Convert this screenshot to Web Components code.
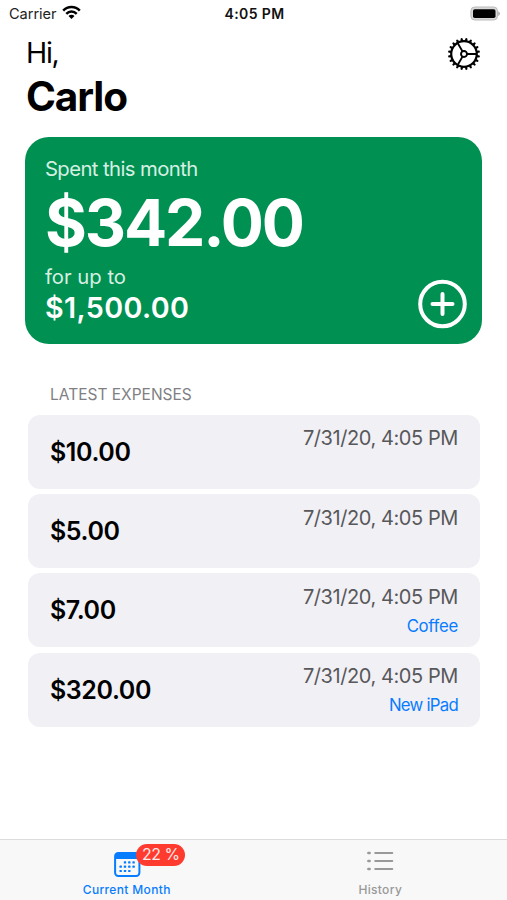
<!DOCTYPE html>
<html lang="en"><head><meta charset="utf-8"><title>Expenses</title>
<style>html,body{margin:0;background:#fff}body{font-family:Inter,"Liberation Sans",sans-serif;color:#000}</style></head>
<body><expense-app></expense-app>
<script>
const define = (name, html) => customElements.define(name, class extends HTMLElement {
  constructor() {
    super();
    const t = document.createElement('template');
    t.innerHTML = html;
    this.attachShadow({mode: 'open'}).append(t.content.cloneNode(true));
  }
});

define('status-bar', `<style>
:host{display:grid;grid-template-columns:1fr auto 1fr;align-items:center;height:27px;padding:0 7px 0 9px;box-sizing:border-box;line-height:20px}
.left{display:flex;align-items:center;gap:5px;font-size:14.6px;letter-spacing:-.05px;color:#222}
.time{font-weight:600;font-size:14px;letter-spacing:.4px;color:#111}
.bat{justify-self:end;display:block}svg{display:block}
.left svg{margin-top:-2px}
</style>
<div class="left"><span>Carrier</span><svg width="19" height="15" viewBox="0 0 19 15" fill="none" stroke="#000" stroke-width="2.5"><path d="M1.2 5.6C5.8.8 13.2.8 17.8 5.6"/><path d="M4.3 8.8C7.2 5.8 11.8 5.8 14.7 8.8"/><path d="M9.5 14 6.5 11C8.1 9.4 10.9 9.4 12.5 11Z" fill="#000" stroke="none"/></svg></div>
<span class="time">4:05 PM</span>
<svg class="bat" width="30" height="16" viewBox="0 0 30 16"><rect x=".9" y="1" width="26.6" height="13" rx="3.8" fill="#d8d8d8" stroke="#bbb" stroke-width="1"/><rect x="3" y="3.2" width="22.5" height="8.8" rx="1.8"/><path d="M28.2 5.3q1.7.7 1.7 2.3t-1.7 2.3z" fill="#aaa"/></svg>`);

customElements.define('gear-icon', class extends HTMLElement {
  constructor() {
    super();
    let teeth = '';
    for (let i = 0; i < 20; i++) teeth += `<path d="M14.8-1.1 16-.7V.7L14.8 1.1H13V-1.1Z" transform="rotate(${i * 18 + 9})"/>`;
    this.attachShadow({mode: 'open'}).innerHTML = `<style>:host{display:block}svg{display:block}</style>
<svg width="34" height="34" viewBox="-17 -17 34 34"><circle r="12.8" fill="none" stroke="#000" stroke-width="2.2"/>${teeth}
<g fill="none" stroke="#000" stroke-width="1.9"><circle r="3"/><path d="M3 0H13M-1.5-2.6-6.5-11.3M-1.5 2.6-6.5 11.3"/></g></svg>`;
  }
});

define('greeting-header', `<style>
:host{display:flex;justify-content:space-between;align-items:flex-start;padding:9px 26px 0 26px;height:109px;box-sizing:border-box}
.hi{font-size:28.5px;line-height:34px;letter-spacing:-1.3px}
.name{font-size:40.5px;font-weight:700;line-height:54px;letter-spacing:-1.1px}
gear-icon{margin-top:1px}
</style><div><div class="hi">Hi,</div><div class="name"><slot></slot></div></div><gear-icon></gear-icon>`);

define('budget-card', `<style>
:host{display:flex;justify-content:space-between;align-items:flex-end;margin:.5px 24.6px 0 25.4px;height:207.5px;box-sizing:border-box;padding:18px 15.4px 15.5px 19.5px;border-radius:24px;background:#009152;color:#fff}
.text{align-self:flex-start}
.label{font-size:20.3px;line-height:28px;letter-spacing:-.58px;color:#d7efe3}
.upto{letter-spacing:0}
.total{font-size:64px;line-height:80px;height:80px;font-weight:650;letter-spacing:-2.1px}
.limit{font-size:28.7px;line-height:34px;font-weight:600;letter-spacing:.4px}
svg{display:block}
</style><div class="text"><div class="label">Spent this month</div><div class="total"><slot name="spent"></slot></div><div class="label upto">for up to</div><div class="limit"><slot name="limit"></slot></div></div>
<svg width="49" height="50" viewBox="0 0 49 50" fill="none" stroke="#fff" stroke-width="4" stroke-linecap="round"><circle cx="24.5" cy="25" r="22.3"/><path d="M14.5 25H34.5M24.5 15V35"/></svg>`);

define('section-title', `<style>:host{display:block;padding:40.5px 50px 10px;font-size:15.5px;line-height:20px;color:#808084}</style><slot></slot>`);

define('expense-row', `<style>
:host{display:flex;justify-content:space-between;margin:0 27px 0 28px;height:74px;box-sizing:border-box;padding:0 22px;border-radius:12px;background:#f1f0f5}
.amount{align-self:center;font-size:25px;font-weight:600;line-height:30px;letter-spacing:-.4px}
.side{display:flex;flex-direction:column;align-items:flex-end;padding-top:10.6px}
.date{font-size:20px;line-height:27px;letter-spacing:-.42px;color:#58585b}
.note{font-size:16.8px;line-height:22px;margin-top:4px;letter-spacing:-.3px;color:#087cff}
.note ::slotted(.tight){letter-spacing:-.75px}
</style><div class="amount"><slot name="amount"></slot></div><div class="side"><div class="date"><slot name="date"></slot></div><div class="note"><slot></slot></div></div>`);

define('expense-list', `<style>:host{display:flex;flex-direction:column;gap:5.45px;flex:1}</style><slot></slot>`);

define('tab-item', `<style>
:host{display:flex;flex-direction:column;align-items:center;flex:1;color:#999;font-size:12px;font-weight:500;letter-spacing:.34px}
:host([active]){color:#087cff}
.icon{position:relative;height:42.6px;display:flex;align-items:flex-start;box-sizing:border-box}
.badge{position:absolute;left:23.5px;top:4px}
.label{line-height:20px}
</style><div class="icon"><slot name="icon"></slot><div class="badge"><slot name="badge"></slot></div></div><div class="label"><slot></slot></div>`);

define('count-badge', `<style>:host{display:block;box-sizing:border-box;width:49px;height:22px;border-radius:11px;background:#ff3b30;color:#ffe9e7;font-size:15.8px;font-weight:400;line-height:22px;text-align:center;white-space:nowrap;letter-spacing:-.4px}</style><slot></slot>`);

customElements.define('calendar-icon', class extends HTMLElement {
  constructor() {
    super();
    let dots = '';
    [[1,2,3],[0,1,2,3],[0,1,2]].forEach((cols, r) => cols.forEach(c => dots += `<rect x="${5.5 + c * 4.3}" y="${9.3 + r * 4.3}" width="2.4" height="2.2" rx=".6"/>`));
    this.attachShadow({mode: 'open'}).innerHTML = `<style>:host{display:block;padding:11.5px 0 0 1px}svg{display:block}</style>
<svg width="27" height="25" viewBox="0 0 27 25" fill="#087cff"><rect x="1.1" y="1.1" width="24.3" height="22.8" rx="3.2" fill="none" stroke="#087cff" stroke-width="2"/><path d="M1 7V4Q1 1 4 1H22.5Q25.5 1 25.5 4V7Z"/>${dots}</svg>`;
  }
});

define('list-icon', `<style>:host{display:block;padding-top:10px}svg{display:block}</style>
<svg width="28" height="22" viewBox="0 0 28 22" fill="none" stroke="#999" stroke-width="2" stroke-linecap="round"><path d="M9.2 3H26.3M9.2 11H26.3M9.2 19H26.3"/><path stroke-width="2.6" d="M2.4 3H3.6M2.4 11H3.6M2.4 19H3.6"/></svg>`);

define('tab-bar', `<style>:host{display:flex;height:61px;box-sizing:border-box;border-top:1px solid #dcdcdc;background:#f8f8f8}</style><slot></slot>`);

define('expense-app', `<style>:host{display:flex;flex-direction:column;height:900px;overflow:hidden}</style>
<status-bar></status-bar>
<greeting-header>Carlo</greeting-header>
<budget-card><span slot="spent">$342.00</span><span slot="limit">$1,500.00</span></budget-card>
<section-title>LATEST EXPENSES</section-title>
<expense-list>
<expense-row><span slot="amount">$10.00</span><span slot="date">7/31/20, 4:05 PM</span></expense-row>
<expense-row><span slot="amount">$5.00</span><span slot="date">7/31/20, 4:05 PM</span></expense-row>
<expense-row><span slot="amount">$7.00</span><span slot="date">7/31/20, 4:05 PM</span>Coffee</expense-row>
<expense-row><span slot="amount">$320.00</span><span slot="date">7/31/20, 4:05 PM</span><span class="tight">New iPad</span></expense-row>
</expense-list>
<tab-bar>
<tab-item active><calendar-icon slot="icon"></calendar-icon><count-badge slot="badge">22 %</count-badge>Current Month</tab-item>
<tab-item><list-icon slot="icon"></list-icon>History</tab-item>
</tab-bar>`);
</script></body></html>
